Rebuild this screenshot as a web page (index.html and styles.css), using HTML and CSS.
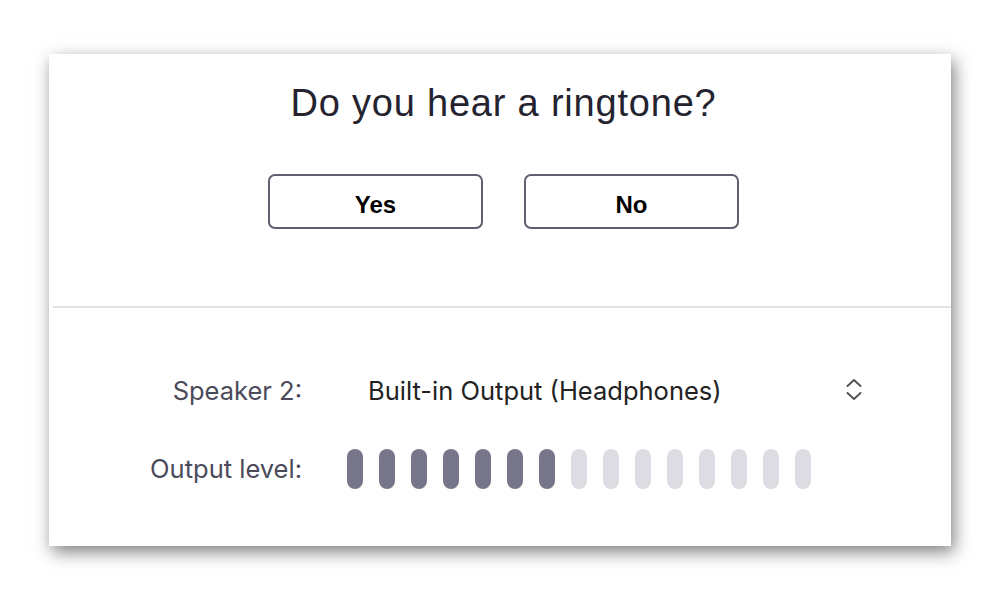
FILE: index.html
```html
<!DOCTYPE html>
<html>
<head>
<meta charset="utf-8">
<link rel="stylesheet" href="styles.css">
</head>
<body>
<div class="panel">
  <section class="top">
    <h1 class="title">Do you hear a ringtone?</h1>
    <div class="actions">
      <button class="btn">Yes</button>
      <button class="btn">No</button>
    </div>
  </section>
  <div class="divider"></div>
  <section class="settings">
    <div class="label">Speaker 2:</div>
    <div class="select">
      <span class="select-text">Built-in Output (Headphones)</span>
      <svg class="chev" width="16" height="24" viewBox="0 0 16 24">
        <path d="M1.5 8 L8 2 L14.5 8" fill="none" stroke="#555" stroke-width="2" stroke-linecap="round" stroke-linejoin="round"/>
        <path d="M1.5 15 L8 21 L14.5 15" fill="none" stroke="#555" stroke-width="2" stroke-linecap="round" stroke-linejoin="round"/>
      </svg>
    </div>
    <div class="label">Output level:</div>
    <div class="meter">
      <span class="bar on"></span><span class="bar on"></span><span class="bar on"></span><span class="bar on"></span><span class="bar on"></span><span class="bar on"></span><span class="bar on"></span>
      <span class="bar"></span><span class="bar"></span><span class="bar"></span><span class="bar"></span><span class="bar"></span><span class="bar"></span><span class="bar"></span><span class="bar"></span>
    </div>
  </section>
</div>
</body>
</html>
```
FILE: styles.css
```css
html, body {
  margin: 0;
  padding: 0;
  background: #ffffff;
}
body {
  min-height: 600px;
  box-sizing: border-box;
  padding: 54px 0 0 49px;
  font-family: "Liberation Sans", Arial, sans-serif;
}
.panel {
  width: 902px;
  height: 492px;
  background: #ffffff;
  box-shadow: 3px 6px 16px rgba(0, 0, 0, 0.5);
  display: flex;
  flex-direction: column;
}
.top {
  height: 252px;
  display: flex;
  flex-direction: column;
  align-items: center;
  padding-left: 7px;
  box-sizing: border-box;
}
.title {
  margin: 27px 0 0 0;
  font-size: 38px;
  line-height: 44px;
  letter-spacing: 0.8px;
  font-weight: normal;
  color: #24232f;
}
.actions {
  display: flex;
  gap: 41px;
  margin-top: 49px;
}
.btn {
  width: 215px;
  height: 55px;
  border: 2px solid #605f6f;
  border-radius: 7px;
  background: #ffffff;
  font-family: "Liberation Sans", Arial, sans-serif;
  font-weight: bold;
  font-size: 24px;
  color: #000000;
  padding: 6px 0 0 0;
}
.divider {
  height: 2px;
  margin-left: 4px;
  background: #e4e4e4;
}
.settings {
  display: grid;
  grid-template-columns: 253px 1fr;
  column-gap: 45px;
  row-gap: 38px;
  padding-top: 62px;
  align-items: center;
  font-family: Inter, "Liberation Sans", sans-serif;
}
.label {
  text-align: right;
  font-size: 25.5px;
  color: #4b4a5a;
}
.select {
  display: flex;
  align-items: center;
  justify-content: space-between;
  width: 515px;
  padding-left: 21px;
  box-sizing: border-box;
  height: 40px;
}
.select-text {
  font-size: 25.5px;
  color: #222222;
}
.chev {
  display: block;
}
.meter {
  display: flex;
  gap: 16px;
  height: 40px;
  margin-top: 1px;
}
.bar {
  width: 16px;
  height: 40px;
  border-radius: 8px;
  background: #dddce2;
}
.bar.on {
  background: #76758a;
}
```
